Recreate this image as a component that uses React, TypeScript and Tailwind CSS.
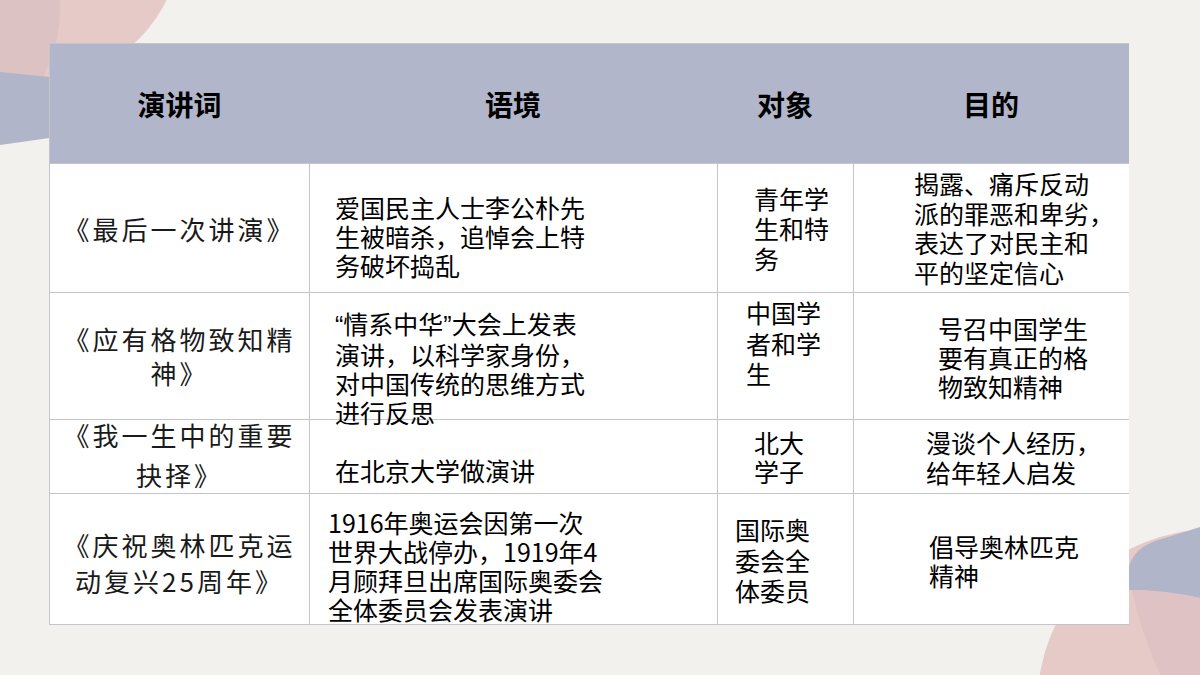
import { ReactNode } from 'react';

type Cell = {
  lines: ReactNode[];
  cls: string;
  inner?: string;
  title?: boolean;
};

// the latin quotes in the slide are narrow, the CJK font draws them full width
const Q = ({ c }: { c: string }) => <span className="font-['Liberation_Sans',sans-serif]">{c}</span>;

const headers = ['演讲词', '语境', '对象', '目的'];

const cells: Cell[] = [
  // row 1
  { lines: ['《最后一次讲演》'], cls: 'pt-[47px] leading-[36px]', title: true },
  { lines: ['爱国民主人士李公朴先', '生被暗杀，追悼会上特', '务破坏捣乱'], cls: 'pl-[25px] pt-[29px] leading-[29px]' },
  { lines: ['青年学', '生和特', '务'], cls: 'pl-[36px] pt-[19px] leading-[30px]' },
  { lines: ['揭露、痛斥反动', '派的罪恶和卑劣，', '表达了对民主和', '平的坚定信心'], cls: 'pl-[60px] pt-[5px] leading-[29.5px]' },
  // row 2
  { lines: ['《应有格物致知精', '神》'], cls: 'pt-[29px] leading-[34px]', title: true },
  {
    lines: [
      <>
        <Q c="“" />情系中华<Q c="”" />大会上发表
      </>,
      '演讲，以科学家身份，',
      '对中国传统的思维方式',
      '进行反思',
    ],
    cls: 'pl-[25px] pt-[16px] leading-[29px]',
  },
  { lines: ['中国学', '者和学', '生'], cls: 'pl-[28px] pt-[4px] leading-[30.5px]' },
  { lines: ['号召中国学生', '要有真正的格', '物致知精神'], cls: 'pl-[84px] pt-[21px] leading-[29px]' },
  // row 3
  { lines: ['《我一生中的重要', '抉择》'], cls: 'leading-[40px]', inner: '-top-[5px]', title: true },
  { lines: ['在北京大学做演讲'], cls: 'pl-[25px] pt-[36px] leading-[29px]' },
  { lines: ['北大', '学子'], cls: 'pl-[36px] pt-[8px] leading-[29px]' },
  { lines: ['漫谈个人经历，', '给年轻人启发'], cls: 'pl-[72px] pt-[7px] leading-[30px]' },
  // row 4
  { lines: ['《庆祝奥林匹克运', '动复兴25周年》'], cls: 'pt-[33px] leading-[36px]', title: true },
  {
    lines: ['1916年奥运会因第一次', '世界大战停办，1919年4', '月顾拜旦出席国际奥委会', '全体委员会发表演讲'],
    cls: 'pl-[18px] pt-[14px] leading-[29px]',
  },
  { lines: ['国际奥', '委会全', '体委员'], cls: 'pl-[17px] pt-[20px] leading-[30.5px]' },
  { lines: ['倡导奥林匹克', '精神'], cls: 'pl-[75px] pt-[38px] leading-[29px]' },
];

function Decor() {
  return (
    <svg className="absolute inset-0" width="1200" height="675" viewBox="0 0 1200 675">
      <circle cx="40" cy="-60" r="140" fill="#e6cac8" />
      <circle cx="-80" cy="10" r="140" fill="#ddc2c3" />
      <path d="M0 72 L120 84 L120 128 L0 145 Z" fill="#b1b5c9" />
      <circle cx="1208" cy="700" r="170" fill="#e6cac8" />
      <path d="M1128 600 L1128 572 Q1131 546 1165 538 L1200 527 L1200 598 Q1160 590 1128 590 Z" fill="#b1b5c9" />
      <path d="M1132 590 Q1165 590 1200 598 L1200 675 L1160 675 Q1140 630 1132 590 Z" fill="#dfc3c4" />
    </svg>
  );
}

export default function App() {
  return (
    <div className="relative h-[675px] w-[1200px] overflow-hidden bg-[#f2f1ee] font-['Noto_Sans_CJK_SC','Noto_Sans',sans-serif]">
      <Decor />
      <div className="relative pl-[49px] pt-[43px]">
        <div className="grid w-[1080px] grid-cols-[259px_408px_136px_276px] grid-rows-[119px_129px_127px_74px_131px] border border-[#c4c4cc] text-black">
          {headers.map((h) => (
            <div key={h} className="flex items-center justify-center bg-[#b2b6cb] text-[28px] font-bold">
              {h}
            </div>
          ))}
          {cells.map((c, i) => (
            <div
              key={i}
              className={
                'overflow-visible border-t border-[#c4c4cc] bg-white ' +
                (i % 4 > 0 ? 'border-l ' : '') +
                (c.title ? 'text-center text-[26px] tracking-[3px] text-[#1a1a1a] ' : 'text-[25px] ') +
                c.cls
              }
            >
              <div className={'relative z-10 ' + (c.inner ?? '')}>
                {c.lines.map((l, li) => (
                  <div key={li} className="whitespace-nowrap">
                    {l}
                  </div>
                ))}
              </div>
            </div>
          ))}
        </div>
      </div>
    </div>
  );
}
